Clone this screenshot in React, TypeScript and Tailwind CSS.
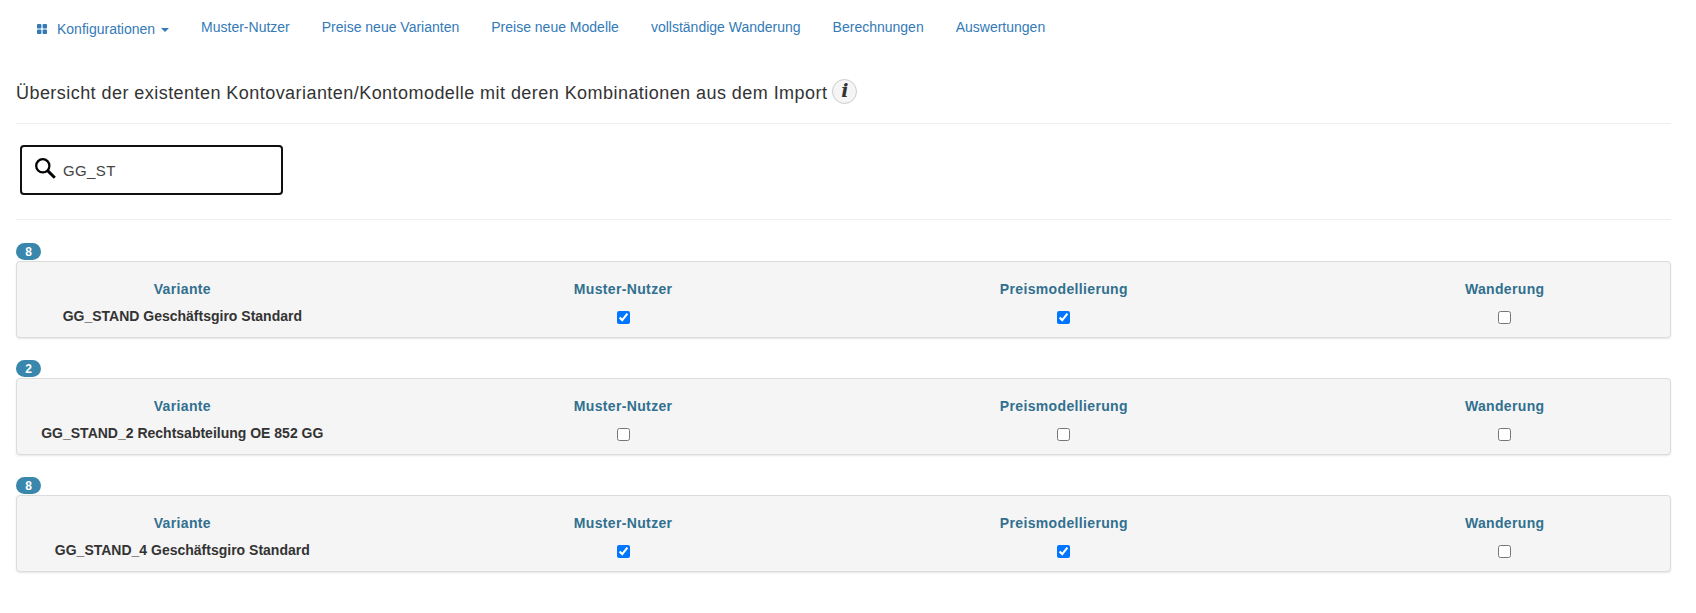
import { useState } from "react";

type Variant = {
  id: string;
  count: number;
  name: string;
  flags: { label: string; checked: boolean }[];
};

const links = [
  "Muster-Nutzer",
  "Preise neue Varianten",
  "Preise neue Modelle",
  "vollständige Wanderung",
  "Berechnungen",
  "Auswertungen",
];

const flags = (muster: boolean, preis: boolean, wanderung: boolean) => [
  { label: "Muster-Nutzer", checked: muster },
  { label: "Preismodellierung", checked: preis },
  { label: "Wanderung", checked: wanderung },
];

const variants: Variant[] = [
  { id: "stand", count: 8, name: "GG_STAND Geschäftsgiro Standard", flags: flags(true, true, false) },
  { id: "stand2", count: 2, name: "GG_STAND_2 Rechtsabteilung OE 852 GG", flags: flags(false, false, false) },
  { id: "stand4", count: 8, name: "GG_STAND_4 Geschäftsgiro Standard", flags: flags(true, true, false) },
];

function GridIcon() {
  return (
    <svg className="h-[10px] w-[10px]" viewBox="0 0 10 10" fill="currentColor" aria-hidden="true">
      <rect x="0" y="0" width="4.4" height="4.4" rx="0.9" />
      <rect x="5.6" y="0" width="4.4" height="4.4" rx="0.9" />
      <rect x="0" y="5.6" width="4.4" height="4.4" rx="0.9" />
      <rect x="5.6" y="5.6" width="4.4" height="4.4" rx="0.9" />
    </svg>
  );
}

function SearchIcon() {
  return (
    <svg className="h-[21px] w-[21px] shrink-0" viewBox="0 0 21 21" fill="none" stroke="#000" aria-hidden="true">
      <circle cx="7.8" cy="7.8" r="6.6" strokeWidth="2.3" />
      <path d="M12.6 12.6 L19.8 19.8" strokeWidth="2.9" />
    </svg>
  );
}

function Nav() {
  return (
    <nav>
      <ul className="flex items-start gap-0.5 pl-[6px] pt-[7px] text-sm text-[#337ab7]">
        <li>
          <button type="button" className="flex items-center px-[15px] pb-2 pt-3">
            <GridIcon />
            <span className="ml-[10px]">Konfigurationen</span>
            <svg className="ml-[6px] mt-px h-1 w-2" viewBox="0 0 8 4" fill="currentColor" aria-hidden="true">
              <path d="M0 0h8L4 4z" />
            </svg>
          </button>
        </li>
        {links.map((link) => (
          <li key={link}>
            <a href="#" className="block px-[15px] py-[10px]">
              {link}
            </a>
          </li>
        ))}
      </ul>
    </nav>
  );
}

function VariantPanel({ variant }: { variant: Variant }) {
  return (
    <section>
      <span className="flex h-[17px] w-[25px] items-center justify-center rounded-full bg-[#3a87ad] text-xs font-bold text-white">
        {variant.count}
      </span>
      <div className="mt-px flex justify-between rounded border border-[#dcdcdc] bg-neutral-100 pb-[11px] pt-[17px] text-sm font-bold shadow-[0_1px_2px_rgba(0,0,0,0.1)]">
        <div className="flex w-1/5 flex-col items-center gap-[7px] whitespace-nowrap">
          <h2 className="tracking-wide text-[#31708f]">Variante</h2>
          <p>{variant.name}</p>
        </div>
        {variant.flags.map((flag) => (
          <label key={flag.label} className="flex w-1/5 flex-col items-center gap-3">
            <span className="tracking-wide text-[#31708f]">{flag.label}</span>
            <input type="checkbox" defaultChecked={flag.checked} className="h-[13px] w-[13px]" />
          </label>
        ))}
      </div>
    </section>
  );
}

export default function App() {
  const [query, setQuery] = useState("GG_ST");

  return (
    <div className="bg-white pb-10 pl-4 pr-[25px] font-['Liberation_Sans',Arial,sans-serif] text-[#333]">
      <Nav />
      <header className="flex items-start gap-[5px] pb-[17px] pt-8">
        <h1 className="pt-0.5 text-lg leading-[25px] tracking-wide">
          Übersicht der existenten Kontovarianten/Kontomodelle mit deren Kombinationen aus dem Import
        </h1>
        <button
          type="button"
          aria-label="Information"
          className="flex h-[25px] w-[25px] items-center justify-center rounded-full border border-[#ccc] bg-neutral-100 pb-0.5 font-['DejaVu_Serif',serif] text-[19px] font-bold italic leading-none"
        >
          i
        </button>
      </header>
      <div className="border-y border-[#eee] pb-6 pl-1 pt-[21px]">
        <label className="flex h-[50px] w-[263px] items-start rounded border-2 border-[#101010] px-[13px] pt-[11px]">
          <SearchIcon />
          <input
            type="text"
            aria-label="Suche"
            value={query}
            onChange={(event) => setQuery(event.target.value)}
            className="ml-[7px] mt-0.5 w-full min-w-0 text-[15px] leading-[22px] tracking-wide text-[#444] outline-none"
          />
        </label>
      </div>
      <main className="flex flex-col gap-[22px] pt-[23px]">
        {variants.map((variant) => (
          <VariantPanel key={variant.id} variant={variant} />
        ))}
      </main>
    </div>
  );
}
